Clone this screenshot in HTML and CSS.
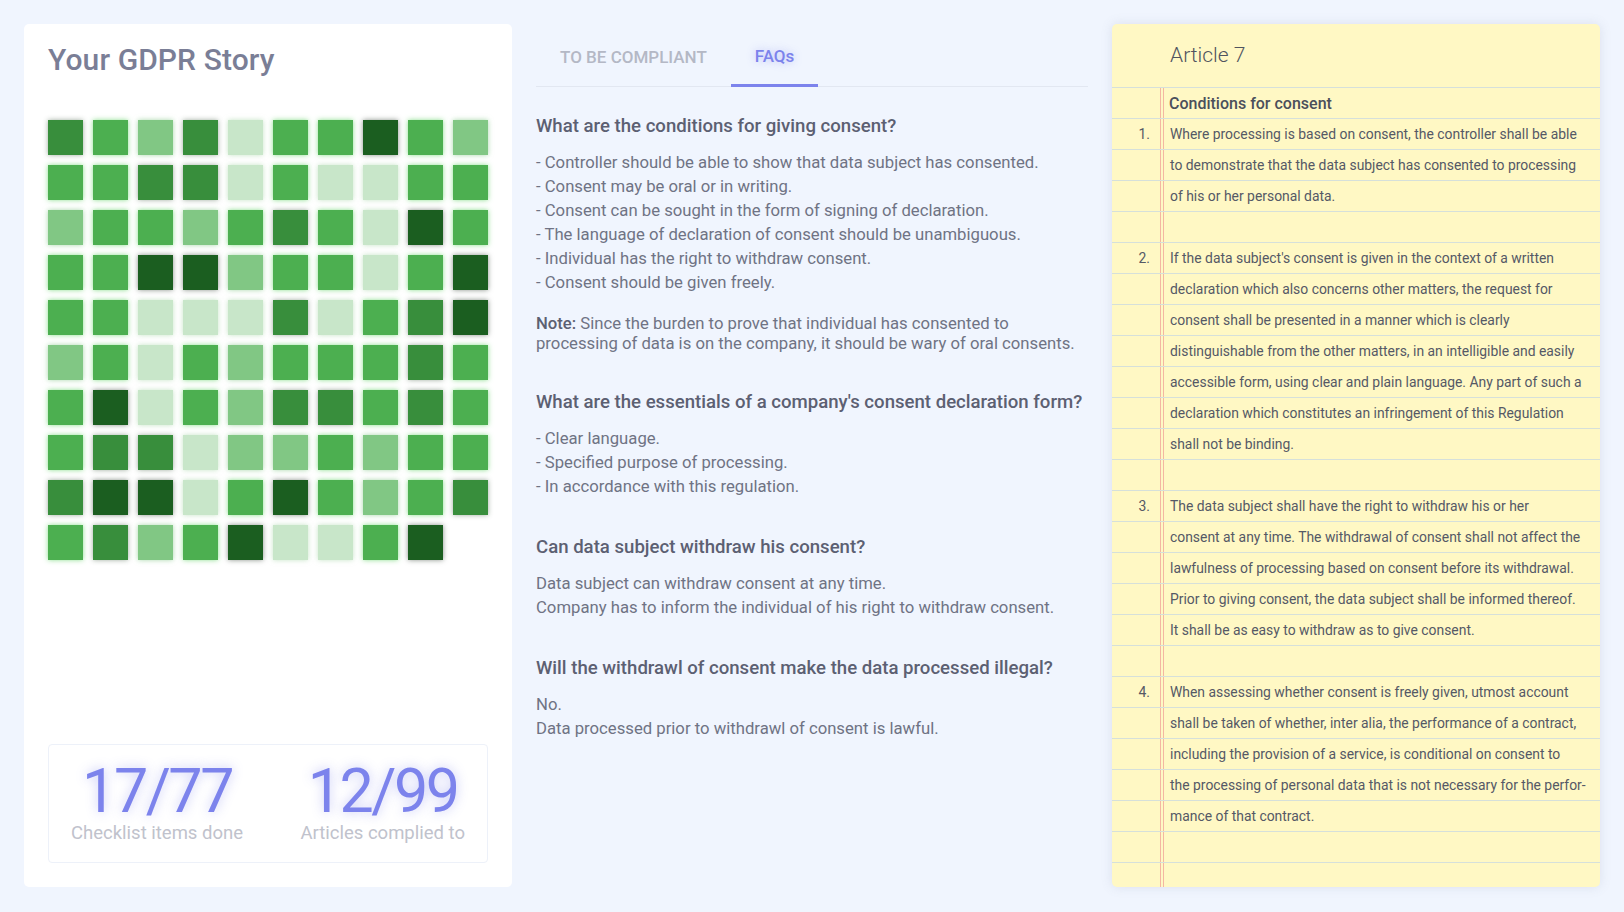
FILE: index.html
```html
<!DOCTYPE html>
<html lang="en">
<head>
<meta charset="utf-8">
<title>Your GDPR Story</title>
<link rel="stylesheet" href="styles.css">
</head>
<body>
<div class="page">
  <section class="story card">
    <h1 class="story-title">Your GDPR Story</h1>
    <div class="squares">
      <span class="sq l3"></span><span class="sq l2"></span><span class="sq l1"></span><span class="sq l3"></span><span class="sq l0"></span><span class="sq l2"></span><span class="sq l2"></span><span class="sq l4"></span><span class="sq l2"></span><span class="sq l1"></span>
      <span class="sq l2"></span><span class="sq l2"></span><span class="sq l3"></span><span class="sq l3"></span><span class="sq l0"></span><span class="sq l2"></span><span class="sq l0"></span><span class="sq l0"></span><span class="sq l2"></span><span class="sq l2"></span>
      <span class="sq l1"></span><span class="sq l2"></span><span class="sq l2"></span><span class="sq l1"></span><span class="sq l2"></span><span class="sq l3"></span><span class="sq l2"></span><span class="sq l0"></span><span class="sq l4"></span><span class="sq l2"></span>
      <span class="sq l2"></span><span class="sq l2"></span><span class="sq l4"></span><span class="sq l4"></span><span class="sq l1"></span><span class="sq l2"></span><span class="sq l2"></span><span class="sq l0"></span><span class="sq l2"></span><span class="sq l4"></span>
      <span class="sq l2"></span><span class="sq l2"></span><span class="sq l0"></span><span class="sq l0"></span><span class="sq l0"></span><span class="sq l3"></span><span class="sq l0"></span><span class="sq l2"></span><span class="sq l3"></span><span class="sq l4"></span>
      <span class="sq l1"></span><span class="sq l2"></span><span class="sq l0"></span><span class="sq l2"></span><span class="sq l1"></span><span class="sq l2"></span><span class="sq l2"></span><span class="sq l2"></span><span class="sq l3"></span><span class="sq l2"></span>
      <span class="sq l2"></span><span class="sq l4"></span><span class="sq l0"></span><span class="sq l2"></span><span class="sq l1"></span><span class="sq l3"></span><span class="sq l3"></span><span class="sq l2"></span><span class="sq l3"></span><span class="sq l2"></span>
      <span class="sq l2"></span><span class="sq l3"></span><span class="sq l3"></span><span class="sq l0"></span><span class="sq l1"></span><span class="sq l1"></span><span class="sq l2"></span><span class="sq l1"></span><span class="sq l2"></span><span class="sq l2"></span>
      <span class="sq l3"></span><span class="sq l4"></span><span class="sq l4"></span><span class="sq l0"></span><span class="sq l2"></span><span class="sq l4"></span><span class="sq l2"></span><span class="sq l1"></span><span class="sq l2"></span><span class="sq l3"></span>
      <span class="sq l2"></span><span class="sq l3"></span><span class="sq l1"></span><span class="sq l2"></span><span class="sq l4"></span><span class="sq l0"></span><span class="sq l0"></span><span class="sq l2"></span><span class="sq l4"></span>
    </div>
    <div class="stats">
      <div class="stat">
        <div class="stat-num">17/77</div>
        <div class="stat-label">Checklist items done</div>
      </div>
      <div class="stat">
        <div class="stat-num">12/99</div>
        <div class="stat-label">Articles complied to</div>
      </div>
    </div>
  </section>

  <section class="faq-col">
    <nav class="tabs">
      <div class="tab">TO BE COMPLIANT</div>
      <div class="tab active">FAQs</div>
    </nav>
    <div class="faqs">
      <div class="faq">
        <h2 class="faq-q">What are the conditions for giving consent?</h2>
        <p class="faq-line">- Controller should be able to show that data subject has consented.</p>
        <p class="faq-line">- Consent may be oral or in writing.</p>
        <p class="faq-line">- Consent can be sought in the form of signing of declaration.</p>
        <p class="faq-line">- The language of declaration of consent should be unambiguous.</p>
        <p class="faq-line">- Individual has the right to withdraw consent.</p>
        <p class="faq-line">- Consent should be given freely.</p>
        <p class="faq-note"><b>Note:</b> Since the burden to prove that individual has consented to processing of data is on the company, it should be wary of oral consents.</p>
      </div>
      <div class="faq">
        <h2 class="faq-q">What are the essentials of a company's consent declaration form?</h2>
        <p class="faq-line">- Clear language.</p>
        <p class="faq-line">- Specified purpose of processing.</p>
        <p class="faq-line">- In accordance with this regulation.</p>
      </div>
      <div class="faq">
        <h2 class="faq-q">Can data subject withdraw his consent?</h2>
        <p class="faq-line">Data subject can withdraw consent at any time.</p>
        <p class="faq-line">Company has to inform the individual of his right to withdraw consent.</p>
      </div>
      <div class="faq">
        <h2 class="faq-q">Will the withdrawl of consent make the data processed illegal?</h2>
        <p class="faq-line">No.</p>
        <p class="faq-line">Data processed prior to withdrawl of consent is lawful.</p>
      </div>
    </div>
  </section>

  <section class="article">
    <h2 class="article-title">Article 7</h2>
    <div class="paper">
      <div class="row"><span class="num"></span><span class="txt heading">Conditions for consent</span></div>
      <div class="row"><span class="num">1.</span><span class="txt">Where processing is based on consent, the controller shall be able</span></div>
      <div class="row"><span class="num"></span><span class="txt">to demonstrate that the data subject has consented to processing</span></div>
      <div class="row"><span class="num"></span><span class="txt">of his or her personal data.</span></div>
      <div class="row"><span class="num"></span><span class="txt"></span></div>
      <div class="row"><span class="num">2.</span><span class="txt">If the data subject's consent is given in the context of a written</span></div>
      <div class="row"><span class="num"></span><span class="txt">declaration which also concerns other matters, the request for</span></div>
      <div class="row"><span class="num"></span><span class="txt">consent shall be presented in a manner which is clearly</span></div>
      <div class="row"><span class="num"></span><span class="txt">distinguishable from the other matters, in an intelligible and easily</span></div>
      <div class="row"><span class="num"></span><span class="txt">accessible form, using clear and plain language. Any part of such a</span></div>
      <div class="row"><span class="num"></span><span class="txt">declaration which constitutes an infringement of this Regulation</span></div>
      <div class="row"><span class="num"></span><span class="txt">shall not be binding.</span></div>
      <div class="row"><span class="num"></span><span class="txt"></span></div>
      <div class="row"><span class="num">3.</span><span class="txt">The data subject shall have the right to withdraw his or her</span></div>
      <div class="row"><span class="num"></span><span class="txt">consent at any time. The withdrawal of consent shall not affect the</span></div>
      <div class="row"><span class="num"></span><span class="txt">lawfulness of processing based on consent before its withdrawal.</span></div>
      <div class="row"><span class="num"></span><span class="txt">Prior to giving consent, the data subject shall be informed thereof.</span></div>
      <div class="row"><span class="num"></span><span class="txt">It shall be as easy to withdraw as to give consent.</span></div>
      <div class="row"><span class="num"></span><span class="txt"></span></div>
      <div class="row"><span class="num">4.</span><span class="txt">When assessing whether consent is freely given, utmost account</span></div>
      <div class="row"><span class="num"></span><span class="txt">shall be taken of whether, inter alia, the performance of a contract,</span></div>
      <div class="row"><span class="num"></span><span class="txt">including the provision of a service, is conditional on consent to</span></div>
      <div class="row"><span class="num"></span><span class="txt">the processing of personal data that is not necessary for the perfor-</span></div>
      <div class="row"><span class="num"></span><span class="txt">mance of that contract.</span></div>
      <div class="row"><span class="num"></span><span class="txt"></span></div>
      <div class="row"><span class="num"></span><span class="txt"></span></div>
    </div>
  </section>
</div>
</body>
</html>
```

FILE: styles.css
```css
* { box-sizing: border-box; }

html, body {
  margin: 0;
  padding: 0;
}

body {
  background: #f0f5fe;
  font-family: Roboto, "Liberation Sans", Arial, sans-serif;
  color: #6f7384;
}

.page {
  display: grid;
  grid-template-columns: 488px 552px 488px;
  grid-template-rows: 863px;
  column-gap: 24px;
  padding: 24px;
  height: 912px;
}

/* ---------- Left card ---------- */
.card {
  background: #ffffff;
  border-radius: 5px;
}

.story {
  display: flex;
  flex-direction: column;
  padding: 24px;
}

.story-title {
  margin: 0;
  font-size: 30px;
  line-height: 24px;
  font-weight: 500;
  color: #7a7e96;
  letter-spacing: 0.1px;
}

.squares {
  margin-top: 48px;
  display: grid;
  grid-template-columns: repeat(10, 35px);
  grid-auto-rows: 35px;
  gap: 10px;
}

.sq { display: block; }
.l0 { background: #c8e6c9; box-shadow: 0 0 5px rgba(160, 210, 160, 0.6); }
.l1 { background: #81c784; box-shadow: 0 0 5px rgba(110, 190, 115, 0.6); }
.l2 { background: #4caf50; box-shadow: 0 0 5px rgba(76, 205, 80, 0.65); }
.l3 { background: #388e3c; box-shadow: 0 0 5px rgba(40, 70, 40, 0.45); }
.l4 { background: #1b5e20; box-shadow: 0 0 5px rgba(20, 35, 20, 0.5); }

.stats {
  margin-top: auto;
  display: flex;
  justify-content: space-between;
  border: 1px solid #edf1f9;
  border-radius: 4px;
  padding: 16px 22px 18px;
}

.stat {
  display: flex;
  flex-direction: column;
  align-items: center;
}

.stat-num {
  font-size: 61px;
  line-height: 61px;
  font-weight: 400;
  letter-spacing: -2.5px;
  color: #7c83ec;
  text-shadow: 0 0 12px rgba(124, 131, 236, 0.45);
}

.stat-label {
  font-size: 18.5px;
  line-height: 22px;
  color: #c0c2cc;
}

/* ---------- Middle column ---------- */
.faq-col {
  display: flex;
  flex-direction: column;
}

.tabs {
  display: flex;
  border-bottom: 1px solid #e2e7f1;
  height: 63px;
}

.tab {
  display: flex;
  align-items: center;
  padding: 4px 24px 0;
  font-size: 17px;
  font-weight: 500;
  color: #b4b8c5;
  border-bottom: 2px solid transparent;
  margin-bottom: -1px;
}

.tab.active {
  color: #7c83ec;
  border-bottom: 3px solid #7c83ec;
  text-shadow: 0 0 8px rgba(124, 131, 236, 0.45);
}

.faqs {
  padding-top: 27px;
}

.faq {
  margin-bottom: 36px;
}

.faq-q {
  margin: 0 0 13px;
  font-size: 18.6px;
  line-height: 24px;
  font-weight: 500;
  color: #5c6072;
}

.faq-line {
  margin: 0;
  font-size: 16.7px;
  line-height: 24px;
  color: #6f7384;
}

.faq-note {
  margin: 19px 0 0;
  font-size: 16.7px;
  line-height: 20px;
  color: #6f7384;
}

.faq-note b {
  font-weight: 500;
  color: #5c6072;
}

/* ---------- Right article ---------- */
.article {
  background: #fff8c4;
  border-radius: 5px;
  box-shadow: 0 0 12px rgba(110, 120, 150, 0.16);
  overflow: hidden;
  display: flex;
  flex-direction: column;
}

.article-title {
  margin: 0;
  height: 63px;
  padding-left: 58px;
  font-size: 21px;
  line-height: 63px;
  font-weight: 300;
  color: #50545f;
}

.paper {
  border-top: 1px solid #d6e0da;
  background-image: linear-gradient(to right,
    transparent 48px, #f4b6a2 48px, #f4b6a2 49px,
    transparent 49px, transparent 51px,
    #f4b6a2 51px, #f4b6a2 52px, transparent 52px);
}

.row {
  display: flex;
  height: 31px;
  border-bottom: 1px solid #d6e0da;
  align-items: center;
  white-space: nowrap;
}

.num {
  flex: 0 0 48px;
  text-align: right;
  padding-right: 10px;
  font-size: 13.9px;
  color: #555965;
}

.txt {
  padding-left: 10px;
  font-size: 13.9px;
  color: #555966;
}

.txt.heading {
  padding-left: 9px;
  font-size: 16px;
  font-weight: 500;
  color: #4b4f5b;
}
```
